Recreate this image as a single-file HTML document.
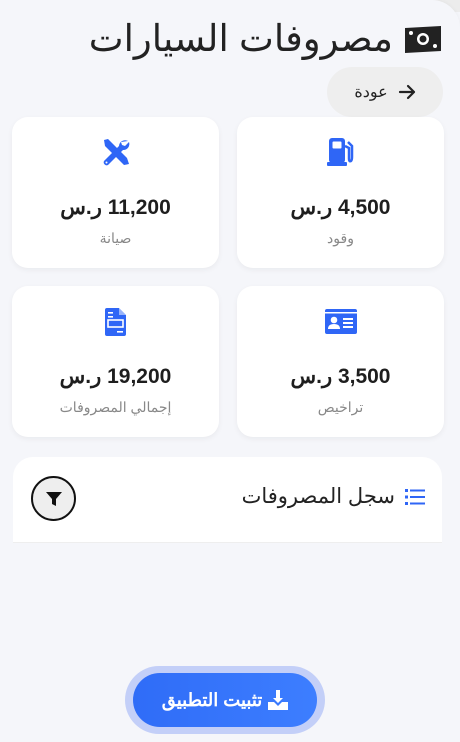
<!DOCTYPE html>
<html lang="ar" dir="rtl"><head><meta charset="utf-8">
<style>
*{box-sizing:border-box;margin:0;padding:0}
body{width:460px;height:742px;overflow:hidden;background:#f5f6fa;font-family:"Liberation Sans","Noto Sans CJK SC",sans-serif;position:relative;color:#222}
.top{position:absolute;left:0;top:0;width:460px;height:12px;background:#ececec}
.wrap{position:absolute;left:0;top:0;width:460px;height:742px;background:#f5f6fa;border-top-right-radius:28px;box-shadow:0 0 4px rgba(0,0,0,.05)}
h1{position:absolute;right:17px;top:17px;font-size:37px;font-weight:400;color:#222;display:flex;align-items:center;gap:10px;white-space:nowrap}
.back{position:absolute;left:327px;top:67px;width:116px;height:50px;border-radius:25px;background:#eeeeee;display:flex;align-items:center;justify-content:center;gap:10px;font-size:16px;color:#222}
.card{position:absolute;width:207px;height:151px;background:#fff;border-radius:16px;box-shadow:0 2px 6px rgba(0,0,0,.05);text-align:center}
.card svg{position:absolute;left:50%;transform:translateX(-50%);top:20px}
.amt{position:absolute;width:100%;top:78px;font-size:21px;font-weight:700;color:#1e1e1e}
.lbl{position:absolute;width:100%;top:113px;font-size:14px;color:#888}
.sec{position:absolute;left:13px;top:457px;width:429px;height:86px;background:#fff;border-radius:20px 20px 0 0;border-bottom:1px solid #eee}
.sec .t{position:absolute;right:17px;top:27px;font-size:21px;color:#222;display:flex;align-items:center;gap:10px}
.flt{position:absolute;left:18px;top:19px;width:45px;height:45px;border-radius:50%;border:2px solid #111;background:#eee;display:flex;align-items:center;justify-content:center}
.inst{position:absolute;left:125px;top:666px;width:200px;height:68px;border-radius:34px;background:#c3cff8}
.inst div{position:absolute;left:8px;top:7px;width:184px;height:54px;border-radius:27px;background:linear-gradient(90deg,#2f6cf7,#3d7eff);color:#fff;font-size:18px;font-weight:700;display:flex;align-items:center;justify-content:center;gap:6px}
</style></head><body>
<div class="top"></div>
<div class="wrap">
<h1><svg width="40" height="30" viewBox="0 0 40 30"><path d="M2 4 L38 2 L38 27 L2 29Z" fill="#222"/><circle cx="20" cy="15" r="6" fill="#fff"/><circle cx="20" cy="15" r="3.5" fill="#222"/><circle cx="8" cy="9" r="2" fill="#fff"/><circle cx="32" cy="22" r="2" fill="#fff"/></svg><span>مصروفات السيارات</span></h1>
<div class="back"><svg width="18" height="16" viewBox="0 0 18 16"><path d="M2 8H16M10 2L16 8L10 14" stroke="#222" stroke-width="2.2" fill="none" stroke-linecap="round" stroke-linejoin="round"/></svg><span>عودة</span></div>

<div class="card" style="left:237px;top:117px"><svg width="28" height="30" viewBox="0 0 28 30"><rect x="2" y="1" width="16" height="25" rx="3" fill="#2f66f6"/><rect x="5.5" y="4.5" width="9" height="7" rx="1" fill="#fff"/><rect x="0" y="25" width="20" height="4" rx="1" fill="#2f66f6"/><path d="M18 9 L22 11 L22 22 Q22 25 24 24 Q25 23 25 20 L25 9 L21 5" stroke="#2f66f6" stroke-width="2.5" fill="none"/></svg><div class="amt">4,500 ر.س</div><div class="lbl">وقود</div></div>
<div class="card" style="left:12px;top:117px"><svg width="30" height="30" viewBox="0 0 30 30"><path d="M3 3 L7 2 L26 21 L28 27 L23 28 L4 9Z" fill="#2f66f6"/><path d="M27 4 A6 6 0 0 0 18 9 L3 24 A3 3 0 0 0 7 28 L22 13 A6 6 0 0 0 28 5 L24 9 L21 8 L20 5Z" fill="#2f66f6"/><circle cx="5.5" cy="25.5" r="1" fill="#fff"/></svg><div class="amt">11,200 ر.س</div><div class="lbl">صيانة</div></div>
<div class="card" style="left:237px;top:286px"><svg width="32" height="26" viewBox="0 0 32 26" style="top:23px"><rect x="0" y="0" width="32" height="25" rx="2" fill="#2f66f6"/><rect x="0" y="3" width="32" height="1.5" fill="#fff"/><circle cx="9" cy="11" r="3.3" fill="#fff"/><path d="M3 20 Q3 15 9 15 Q15 15 15 20Z" fill="#fff"/><rect x="18" y="9" width="10" height="2" fill="#fff"/><rect x="18" y="13" width="10" height="2" fill="#fff"/><rect x="18" y="17" width="10" height="2" fill="#fff"/></svg><div class="amt">3,500 ر.س</div><div class="lbl">تراخيص</div></div>
<div class="card" style="left:12px;top:286px"><svg width="22" height="28" viewBox="0 0 22 28" style="top:22px"><path d="M0 2 Q0 0 2 0 L14 0 L21 7 L21 26 Q21 28 19 28 L2 28 Q0 28 0 26Z" fill="#2f66f6"/><path d="M14 0 L14 7 L21 7" fill="#fff" opacity=".5"/><rect x="3" y="4" width="5" height="1.6" fill="#fff"/><rect x="3" y="8" width="5" height="1.6" fill="#fff"/><rect x="3" y="12" width="15" height="7" fill="none" stroke="#fff" stroke-width="1.6"/><rect x="12" y="23" width="6" height="1.6" fill="#fff"/></svg><div class="amt">19,200 ر.س</div><div class="lbl">إجمالي المصروفات</div></div>

<div class="sec"><div class="t"><svg width="20" height="16" viewBox="0 0 20 16"><g fill="#2f66f6"><rect x="0" y="0" width="3" height="3"/><rect x="0" y="6.5" width="3" height="3"/><rect x="0" y="13" width="3" height="3"/><rect x="5" y="0.5" width="15" height="2"/><rect x="5" y="7" width="15" height="2"/><rect x="5" y="13.5" width="15" height="2"/></g></svg><span>سجل المصروفات</span></div>
<div class="flt"><svg width="18" height="18" viewBox="0 0 18 18"><path d="M1 2 H17 L11 9 V16 L7 14 V9Z" fill="#111"/></svg></div></div>

<div class="inst"><div><svg width="20" height="20" viewBox="0 0 20 20"><path d="M8 0H12V8H15L10 13L5 8H8Z" fill="#fff"/><path d="M0 12H6L10 16L14 12H20V20H0Z" fill="#fff"/></svg><span>تثبيت التطبيق</span></div></div>
</div>
</body></html>
